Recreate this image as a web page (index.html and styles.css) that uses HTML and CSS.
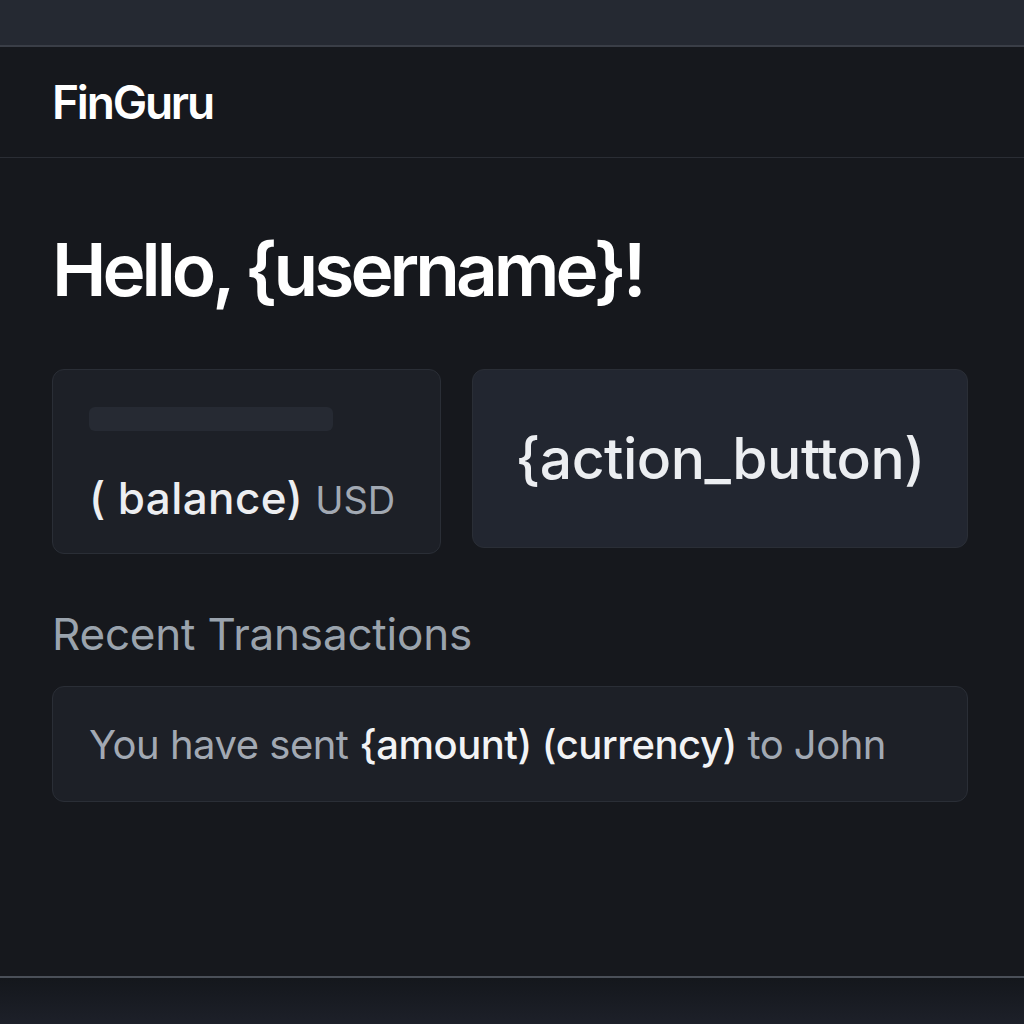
FILE: index.html
```html
<!doctype html>
<html>
<head>
<meta charset="utf-8">
<link rel="stylesheet" href="styles.css">
<title>FinGuru</title>
</head>
<body>
<div class="topbar"></div>

<header class="header">
    <div class="logo">FinGuru</div>
</header>

<main class="main">
    <h1 class="greeting">Hello, {username}!</h1>

    <div class="cards">
        <div class="card balance">
            <div class="placeholder"></div>
            <p class="amount">( balance) <span class="currency">USD</span></p>
        </div>
        <div class="card action">
            <span>{action_button)</span>
        </div>
    </div>

    <h2 class="section-title">Recent Transactions</h2>

    <div class="card transaction">
        <p>You have sent <strong>{amount) (currency)</strong> to John</p>
    </div>
</main>

<footer class="footer"></footer>
</body>
</html>
```

FILE: styles.css
```css
h1,
h2,
p {
    margin: 0;
    padding: 0;
}
html,
body {
    height: 100%;
}
body {
    margin: 0;
    font-family: Inter, "Noto Sans", "Liberation Sans", sans-serif;
    background: #16181d;
    color: #f2f3f5;
    display: flex;
    flex-direction: column;
}
.topbar {
    height: 45px;
    background: #252932;
    border-bottom: 2px solid #3a3e47;
}
.header {
    height: 110px;
    display: flex;
    align-items: center;
    padding: 0 52px;
    border-bottom: 1px solid #2a2d34;
}
.logo {
    font-size: 46px;
    font-weight: 600;
    letter-spacing: -2.2px;
    color: #ffffff;
}
.main {
    flex: 1;
    padding: 75px 56px 0 52px;
}
.greeting {
    font-size: 73px;
    font-weight: 600;
    letter-spacing: -4px;
    line-height: 1;
    color: #ffffff;
    margin-bottom: 63px;
}
.cards {
    display: flex;
    gap: 31px;
    align-items: flex-start;
    margin-bottom: 53px;
}
.card {
    background: #1d2027;
    border: 1px solid #2a2e36;
    border-radius: 12px;
}
.balance {
    width: 389px;
    height: 185px;
    padding: 37px 36px 0;
    box-sizing: border-box;
}
.placeholder {
    width: 244px;
    height: 24px;
    border-radius: 6px;
    background: #262a33;
    margin-bottom: 40px;
}
.amount {
    font-size: 44px;
    font-weight: 500;
    letter-spacing: 0.4px;
    color: #eceef1;
    white-space: nowrap;
}
.currency {
    font-size: 38px;
    font-weight: 400;
    letter-spacing: 0;
    color: #a2a9b3;
}
.action {
    flex: 1;
    height: 179px;
    box-sizing: border-box;
    background: #222630;
    display: flex;
    align-items: center;
    justify-content: center;
    font-size: 57px;
    font-weight: 500;
    color: #eceef1;
    letter-spacing: -0.5px;
}
.section-title {
    font-size: 44px;
    font-weight: 400;
    color: #9aa3ad;
    letter-spacing: -0.2px;
    margin-bottom: 25px;
}
.transaction {
    height: 116px;
    box-sizing: border-box;
    display: flex;
    align-items: center;
    padding: 0 36px;
}
.transaction p {
    font-size: 40px;
    color: #a2a9b3;
    letter-spacing: -0.5px;
}
.transaction strong {
    font-weight: 500;
    color: #f2f3f5;
}
.footer {
    height: 46px;
    border-top: 2px solid #4a4f58;
    background: linear-gradient(#14171c, #1d2029);
}
```
